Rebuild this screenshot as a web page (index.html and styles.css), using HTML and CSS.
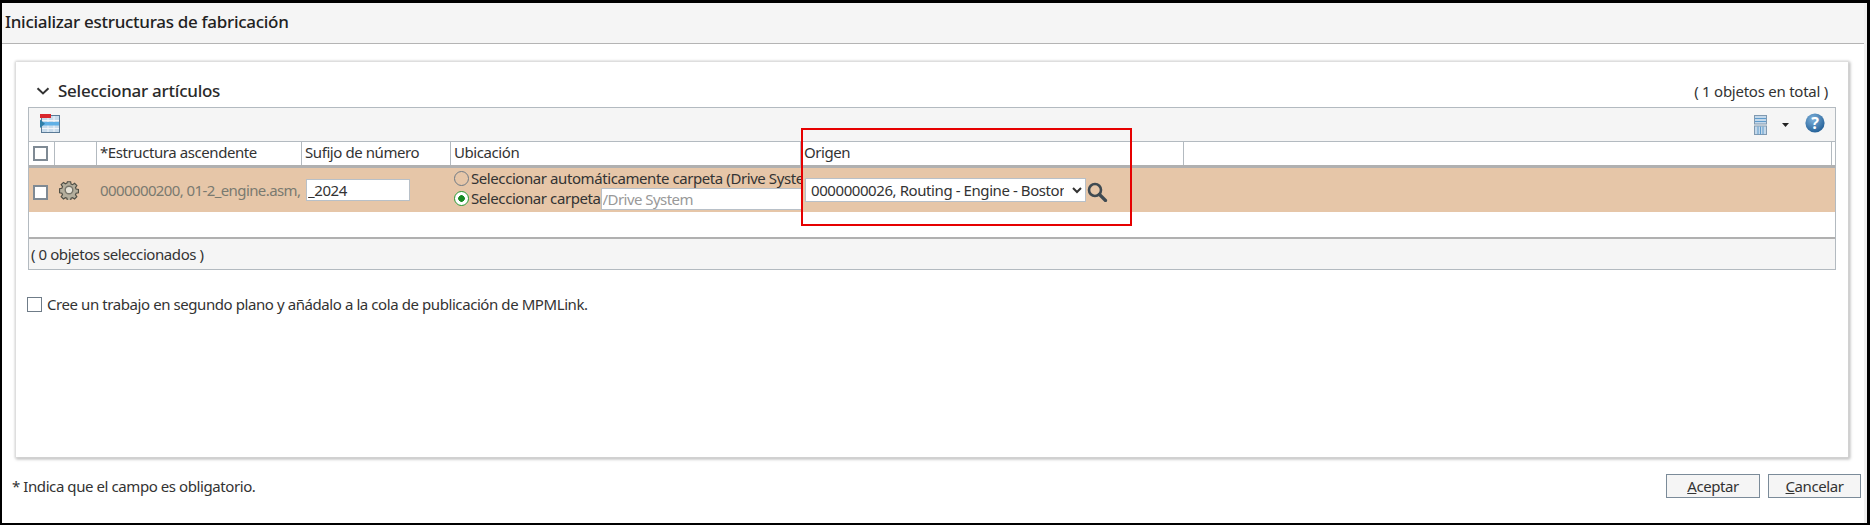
FILE: index.html
```html
<!DOCTYPE html>
<html>
  <head>
    <meta charset="utf-8">
    <title>Inicializar estructuras de fabricación</title>
    <link rel="stylesheet" href="styles.css">
  </head>

  <body>
    <div class="window">
      <div class="page">
        <div class="title-bar">Inicializar estructuras de fabricación</div>

        <div class="panel">
          <div class="panel-header">
            <svg class="chevron" width="14" height="8" viewBox="0 0 14 8"><path d="M1.5 1.2 L7 6.4 L12.5 1.2" fill="none" stroke="#333" stroke-width="2"/></svg>
            <span class="panel-title">Seleccionar artículos</span>
            <span class="total">( 1 objetos en total )</span>
          </div>

          <div class="table">
            <div class="toolbar">
              <svg class="icon-table" width="20" height="19" viewBox="0 0 20 19">
                <rect x="1.5" y="1.5" width="18" height="17" fill="#c9dcec" stroke="#5a7a96"/>
                <path d="M2 6.5h17M2 10.5h17M2 14.5h17M8 2v16M14 2v16" stroke="#f2f6fa" stroke-width="1"/>
                <rect x="3" y="8" width="16" height="3.5" fill="#5fb0e6"/>
                <path d="M0 5.5 L5 9.8 L0 14 Z" fill="#2f7fa8"/>
                <rect x="0" y="0" width="11" height="4" fill="#d9262c"/>
              </svg>
              <div class="toolbar-right">
                <svg class="icon-columns" width="13" height="20" viewBox="0 0 13 20">
                  <rect x="0.5" y="0.5" width="12" height="8.5" fill="#c4d8ea" stroke="#8099b0"/>
                  <path d="M1 3.5h11M1 6.5h11" stroke="#5f9bcb" stroke-width="1"/>
                  <rect x="0.5" y="11" width="12" height="8.5" fill="#c4d8ea" stroke="#8099b0"/>
                  <path d="M4 11.5v8M6.5 11.5v8M9 11.5v8" stroke="#5f9bcb" stroke-width="1"/>
                </svg>
                <svg class="icon-caret" width="7" height="4" viewBox="0 0 7 4"><path d="M0 0h7L3.5 4z" fill="#222"/></svg>
                <svg class="icon-help" width="20" height="20" viewBox="0 0 20 20">
                  <defs>
                    <radialGradient id="helpFill" cx="40%" cy="30%" r="75%">
                      <stop offset="0" stop-color="#7fb2dc"/>
                      <stop offset="1" stop-color="#1f5c94"/>
                    </radialGradient>
                  </defs>
                  <circle cx="10" cy="10" r="9.6" fill="url(#helpFill)"/>
                  <text x="10" y="15.5" text-anchor="middle" class="help-mark">?</text>
                </svg>
              </div>
            </div>

            <div class="row head-row">
              <div class="cell"><input type="checkbox" class="check check-table"></div>
              <div class="cell"></div>
              <div class="cell">*Estructura ascendente</div>
              <div class="cell">Sufijo de número</div>
              <div class="cell">Ubicación</div>
              <div class="cell">Origen</div>
              <div class="cell"></div>
              <div class="cell"></div>
            </div>

            <div class="row data-row">
              <div class="cell check-cell"><input type="checkbox" class="check check-table"></div>
              <div class="cell gear-cell">
                <svg width="20" height="20" viewBox="0 0 20 20">
                  <path d="M8.2 0.8h3.6l0.5 2.6 1.7 0.7 2.2-1.5 2.5 2.5-1.5 2.2 0.7 1.7 2.6 0.5v3.6l-2.6 0.5-0.7 1.7 1.5 2.2-2.5 2.5-2.2-1.5-1.7 0.7-0.5 2.6H8.2l-0.5-2.6-1.7-0.7-2.2 1.5-2.5-2.5 1.5-2.2-0.7-1.7-2.6-0.5V8.5l2.6-0.5 0.7-1.7-1.5-2.2 2.5-2.5 2.2 1.5 1.7-0.7z" transform="translate(1 1) scale(.9)" fill="#b4ae9c" stroke="#4f4f46" stroke-width="1.3"/>
                  <circle cx="10" cy="10" r="3.8" fill="#e8e4d8" stroke="#77756a" stroke-width="1.4"/>
                </svg>
              </div>
              <div class="cell parent-cell">0000000200, 01-2_engine.asm,</div>
              <div class="cell suffix-cell"><input type="text" class="text-input suffix-input" value="_2024"></div>
              <div class="cell location-cell">
                <label class="radio-line"><input type="radio" name="folder" class="radio">Seleccionar automáticamente carpeta (Drive System)</label>
                <label class="radio-line"><input type="radio" name="folder" class="radio" checked>Seleccionar carpeta<input type="text" class="text-input folder-input" value="/Drive System"></label>
              </div>
              <div class="cell origin-cell">
                <select class="origin-select">
                  <option>0000000026, Routing - Engine - Boston</option>
                </select>
                <svg class="icon-search" width="22" height="20" viewBox="0 0 22 20">
                  <circle cx="9" cy="8" r="6" fill="none" stroke="#3f4a52" stroke-width="2.6"/>
                  <path d="M13.5 12.5 L19.5 18.5" stroke="#3f4a52" stroke-width="3.2" stroke-linecap="round"/>
                </svg>
              </div>
              <div class="cell"></div>
              <div class="cell"></div>
            </div>

            <div class="empty-row"></div>
            <div class="table-footer">( 0 objetos seleccionados )</div>
          </div>

          <label class="publish-line"><input type="checkbox" class="check"><span class="publish-text">Cree un trabajo en segundo plano y añádalo a la cola de publicación de MPMLink.</span></label>
        </div>

        <div class="footer">
          <span class="required-note">* Indica que el campo es obligatorio.</span>
          <button class="button"><u>A</u>ceptar</button>
          <button class="button"><u>C</u>ancelar</button>
        </div>
      </div>

      <div class="highlight"></div>
    </div>
  </body>
</html>
```

FILE: styles.css
```css
* {
  box-sizing: border-box;
  margin: 0;
  padding: 0;
}

body {
  width: 1870px;
  height: 525px;
  overflow: hidden;
  background: #fff;
  color: #333;
  font-family: "Noto Sans", sans-serif;
  font-size: 15px;
  letter-spacing: -0.42px;
}

input, select, button {
  font-family: inherit;
  letter-spacing: inherit;
}

/* Frame */
.window {
  position: relative;
  height: 525px;
  border-style: solid;
  border-color: #000;
  border-width: 3px 3px 2px 2px;
}
.page {
  height: 100%;
  display: flex;
  flex-direction: column;
  border-right: 3px solid #f0f0f0;
}
.title-bar {
  height: 41px;
  padding: 0 0 4px 3px;
  display: flex;
  align-items: center;
  background: #f5f5f5;
  border-bottom: 1px solid #b4b4b4;
  color: #222;
  font-size: 17px;
  letter-spacing: -0.29px;
  font-weight: 500;
}

/* Panel */
.panel {
  height: 395px;
  margin: 18px 16px 0 14px;
  padding: 0 12px;
  background: #fff;
  box-shadow: 0 0 2px 1px #ddd, 1px 1px 3px 1px #aaa;
}
.panel-header {
  height: 45px;
  padding: 12px 8px 0 8px;
  display: flex;
  align-items: center;
}
.chevron {
  margin-right: 8px;
}
.panel-title {
  color: #2a2a2a;
  font-size: 17px;
  letter-spacing: -0.25px;
  font-weight: 500;
}
.total {
  margin-left: auto;
  color: #333;
  letter-spacing: -0.25px;
}

/* Table */
.table {
  height: 163px;
  border: 1px solid #b3bac0;
}
.toolbar {
  height: 34px;
  padding: 5px 10px 0 11px;
  display: flex;
  background: #f5f5f5;
  border-bottom: 1px solid #b3bac0;
}
.icon-table {
  margin-top: 1px;
}
.toolbar-right {
  margin-left: auto;
  display: flex;
  align-items: flex-start;
}
.icon-columns {
  margin: 2px 15px 0 0;
}
.icon-caret {
  margin: 10px 16px 0 0;
}
.help-mark {
  fill: #fff;
  font-size: 16px;
  font-weight: 700;
  letter-spacing: 0;
}
.row {
  display: grid;
  grid-template-columns: 26px 42px 205px 149px 350px 383px 648px 1fr;
}
.cell {
  display: flex;
  align-items: center;
  min-width: 0;
  overflow: hidden;
  white-space: nowrap;
}
.head-row {
  height: 26px;
  border-bottom: 3px solid #b0b0b0;
}
.head-row .cell {
  padding: 0 0 4px 3px;
  border-right: 1px solid #b3bac0;
}
.head-row .cell:last-child {
  border-right: 0;
}
.head-row .cell:first-child {
  padding-bottom: 0;
}
.data-row {
  height: 44px;
  background: #e6c6a8;
}
.data-row .cell {
  padding-left: 3px;
}
.data-row .check-cell {
  padding-top: 4px;
}
.data-row .gear-cell {
  padding-left: 4px;
}
.parent-cell {
  color: #7a7a70;
  letter-spacing: -0.6px;
}
.data-row .suffix-cell {
  padding-left: 4px;
}
.location-cell {
  flex-direction: column;
  align-items: flex-start;
}
.radio-line {
  display: flex;
  align-items: center;
  height: 20px;
}
.data-row .origin-cell {
  padding-left: 4px;
}
.empty-row {
  height: 27px;
  border-bottom: 2px solid #b0b0b0;
}
.table-footer {
  height: 30px;
  padding-left: 2px;
  display: flex;
  align-items: center;
  background: #f5f5f5;
}

/* Form controls */
.check {
  appearance: none;
  display: block;
  flex: none;
  width: 15px;
  height: 15px;
  background: #fff;
  border: 1px solid #6f7c88;
}
.check-table {
  margin-left: 1px;
  border-width: 2px;
  border-color: #7f8a94;
}
.radio {
  appearance: none;
  flex: none;
  width: 15px;
  height: 15px;
  margin-right: 2px;
  border: 1.5px solid #6f7a85;
  border-radius: 50%;
}
.radio:checked {
  background: radial-gradient(circle, #178a24 0 3px, #fff 3.6px);
  border-color: #2a9a34;
}
.text-input {
  height: 22px;
  padding: 0 1px;
  background: #fff;
  border: 1px solid #b8c0c8;
  border-radius: 0;
  font-size: 15px;
  color: #333;
}
.suffix-input {
  width: 104px;
}
.folder-input {
  flex: none;
  width: 250px;
  margin-top: 2px;
  color: #999;
  letter-spacing: -0.55px;
}
.origin-select {
  flex: none;
  width: 281px;
  height: 24px;
  padding: 0 5px 0 1px;
  background-color: #fff;
  border: 1px solid #b8c0c8;
  border-radius: 0;
  color: #333;
  font-size: 15px;
}
.icon-search {
  flex: none;
  margin-top: 3px;
}

/* Below the table */
.publish-line {
  margin: 27px 0 0 -1px;
  display: flex;
  align-items: center;
  height: 15px;
}
.publish-line .check {
  margin-right: 5px;
}
.publish-text {
  margin-top: -1px;
}
.footer {
  height: 24px;
  margin-top: 17px;
  padding: 0 3px 0 10px;
  display: flex;
  align-items: center;
  gap: 8px;
}
.required-note {
  margin-right: auto;
}
.button {
  width: 94px;
  height: 24px;
  background: #f5f5f5;
  border: 1px solid #7b8b99;
  color: #333;
  font-size: 15px;
}
.button + .button {
  width: 93px;
}

/* Red mark over the Origen column */
.highlight {
  position: absolute;
  left: 799px;
  top: 125px;
  width: 331px;
  height: 98px;
  border: 2px solid #e60000;
}
```
